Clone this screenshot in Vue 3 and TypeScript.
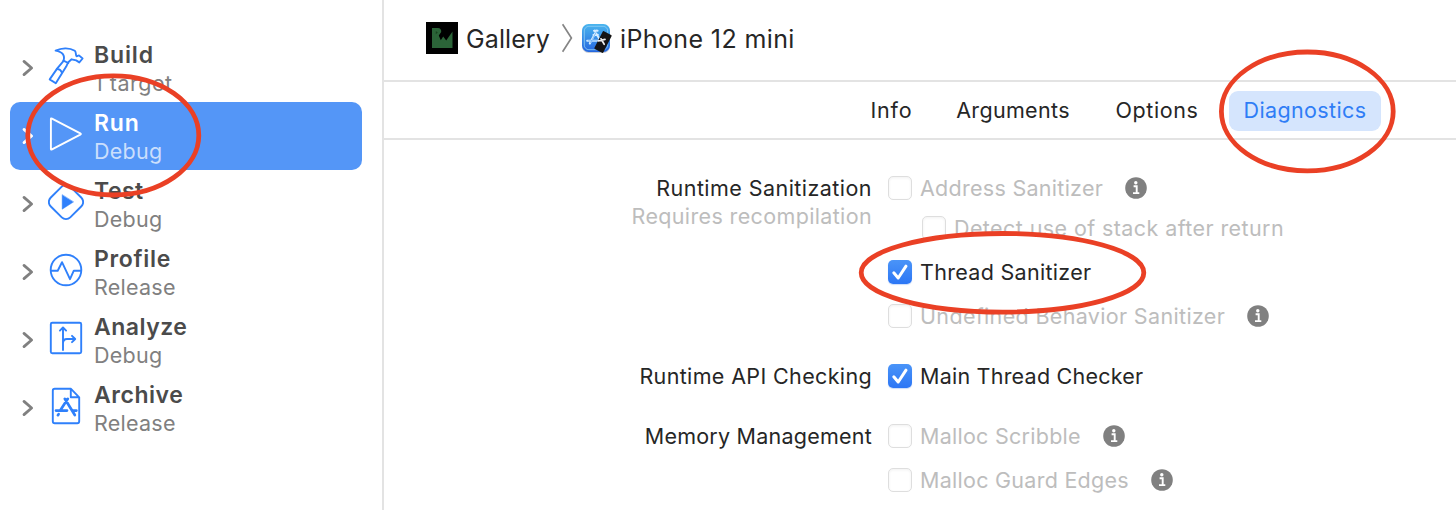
<script setup lang="ts">
interface Step { title: string; sub: string; icon: string; ts: number; ss: number; selected?: boolean }
interface Option { label: string; ls: number; checked?: boolean; info?: boolean; nested?: boolean }
interface Group { title: string; ls: number; note?: string; noteLs?: number; options: Option[] }

const steps: Step[] = [
  { title: 'Build', sub: '1 target', icon: 'hammer', ts: 0.85, ss: 0.5 },
  { title: 'Run', sub: 'Debug', icon: 'run', ts: 0.8, ss: 0.27, selected: true },
  { title: 'Test', sub: 'Debug', icon: 'test', ts: 0.5, ss: 0.27 },
  { title: 'Profile', sub: 'Release', icon: 'profile', ts: 0.7, ss: 0.25 },
  { title: 'Analyze', sub: 'Debug', icon: 'analyze', ts: 0.5, ss: 0.27 },
  { title: 'Archive', sub: 'Release', icon: 'archive', ts: 0.55, ss: 0.25 },
]

const tabs = [
  { label: 'Info', width: 68, ls: 0.8 },
  { label: 'Arguments', width: 144, ls: 0.33 },
  { label: 'Options', width: 112, ls: 0.59 },
  { label: 'Diagnostics', width: 152, ls: 0.36, active: true },
]

const groups: Group[] = [
  {
    title: 'Runtime Sanitization', ls: 0.45, note: 'Requires recompilation', noteLs: 0.36,
    options: [
      { label: 'Address Sanitizer', ls: 0.28, info: true },
      { label: 'Detect use of stack after return', ls: 0.41, nested: true },
      { label: 'Thread Sanitizer', ls: 0.3, checked: true },
      { label: 'Undefined Behavior Sanitizer', ls: 0.34, info: true },
    ],
  },
  { title: 'Runtime API Checking', ls: 0.36, options: [{ label: 'Main Thread Checker', ls: 0.23, checked: true }] },
  {
    title: 'Memory Management', ls: 0.23,
    options: [
      { label: 'Malloc Scribble', ls: 0.26, info: true },
      { label: 'Malloc Guard Edges', ls: 0.27, info: true },
    ],
  },
]

const spacing = (v?: number) => ({ letterSpacing: `${v ?? 0}px` })
</script>

<template>
  <div class="window">
    <aside class="sidebar">
      <div v-for="s in steps" :key="s.title" class="step" :class="{ selected: s.selected }">
        <svg class="chevron" width="12" height="18" viewBox="0 0 12 18"><path d="M2 2.4 9.6 9 2 15.6" /></svg>
        <svg class="icon" width="36" height="40" viewBox="0 0 36 40">
          <g v-if="s.icon === 'hammer'">
            <path d="M7.6 4.6C13 2.2 21 1.2 26.8 4.8C28.4 6 27.4 8.8 28.5 10.3L31 9.4L34.6 12.5L31.3 16.4L28.2 14.4L23.6 13.3L20.3 16.2L18.2 20.6L7.8 37.3L1.7 33.4L9.3 22.4L15.4 15.2C17.4 9.6 14.5 5.6 7.6 4.6Z" />
            <path d="M15.4 14.6 20.3 17M8.8 23.2C11 22.8 13 24.3 13.8 26.4" />
          </g>
          <path v-else-if="s.icon === 'run'" d="M2.9 5.2V34.8Q2.9 36 4 35.4L32.3 20.7Q33.5 20 32.3 19.3L4 4.6Q2.9 4 2.9 5.2Z" />
          <g v-else-if="s.icon === 'test'">
            <rect x="4.1" y="6.1" width="27.8" height="27.8" rx="6" transform="rotate(45 18 20)" />
            <path class="solid" d="M14.2 13V27.2L25.3 20.1Z" />
          </g>
          <g v-else-if="s.icon === 'profile'">
            <circle cx="18" cy="20" r="15.3" />
            <path d="M3 20.7H9.7L14 12.2 22 29.2 25.8 20.7H33" />
          </g>
          <g v-else-if="s.icon === 'analyze'">
            <rect x="2.8" y="4.8" width="30.4" height="30.4" rx="1.5" />
            <path d="M15 32V10M11.9 12.6 15 9.4 18.1 12.6M15 25.5Q15 21 19 21H27M24 17.8 27.2 21 24 24.2" />
          </g>
          <g v-else>
            <path d="M23 2.8H6.7Q4.8 2.8 4.8 4.7V35.3Q4.8 37.2 6.7 37.2H29.3Q31.2 37.2 31.2 35.3V11.3ZM22.8 3V11.3H31" />
            <path class="tools" d="M19.8 12.8 12.2 24.4M10.6 28.2 9.9 29.2M16.8 12.8 26.8 29M8 24.6H19M25 24.6H28.4" />
          </g>
        </svg>
        <div class="names">
          <div class="title" :style="spacing(s.ts)">{{ s.title }}</div>
          <div class="sub" :style="spacing(s.ss)">{{ s.sub }}</div>
        </div>
      </div>
    </aside>

    <main class="main">
      <header class="path">
        <svg width="32" height="32" viewBox="0 0 32 32">
          <rect width="32" height="32" fill="#000" />
          <path d="M6 6H12Q15.5 6.3 15.2 10L12.8 13.5 14.8 18.3 17.2 14.4 20.2 18.6 26.5 9.5V26H6Z" fill="#2b6438" />
          <path d="M9.8 9V12.2L11.8 10.4Z" fill="#19431f" />
        </svg>
        <span class="crumb project">Gallery</span>
        <svg class="sep" width="12" height="30" viewBox="0 0 12 30"><path d="M1.6 1.2 10.4 15 1.6 28.8" fill="none" stroke="#858585" stroke-width="1.7" /></svg>
        <svg class="app" width="32" height="32" viewBox="0 0 32 32">
          <defs>
            <linearGradient id="appFill" x1="0" y1="0" x2="0" y2="1"><stop offset="0" stop-color="#4ab5ee" /><stop offset="1" stop-color="#2567df" /></linearGradient>
          </defs>
          <rect x="2" y="3" width="28" height="28" rx="6.5" fill="#c9ced6" />
          <rect x="2" y="2" width="28" height="28" rx="6.5" fill="url(#appFill)" />
          <rect x="4.3" y="4.3" width="23.4" height="23.4" rx="4.6" fill="none" stroke="#8fcff5" stroke-width=".8" />
          <path d="M16.6 8.5 9.8 21.5M14.5 8.5 20 18M14 8.8H17.6M13.4 13H18M7.2 18.8H21" fill="none" stroke="#d7edff" stroke-width="2" stroke-linecap="round" />
          <path d="M16.6 9.5 10.4 21M7.8 18.8H18" fill="none" stroke="#4c9df0" stroke-width=".6" />
          <rect x="18" y="10" width="10" height="20" rx="1" fill="#141414" transform="rotate(27 23 20)" />
          <path d="M18.5 18.8 25 17.4M21 16.8 24.2 22.3" stroke="#eee" stroke-width="1.7" stroke-linecap="round" />
        </svg>
        <span class="crumb scheme">iPhone 12 mini</span>
      </header>

      <nav class="tabs">
        <div v-for="t in tabs" :key="t.label" class="tab" :class="{ active: t.active }" :style="{ width: `${t.width}px`, ...spacing(t.ls) }">{{ t.label }}</div>
      </nav>

      <div class="groups">
        <section v-for="g in groups" :key="g.title" class="group">
          <div class="legend">
            <div :style="spacing(g.ls)">{{ g.title }}</div>
            <div v-if="g.note" class="note" :style="spacing(g.noteLs)">{{ g.note }}</div>
          </div>
          <div class="options">
            <div v-for="o in g.options" :key="o.label" class="option" :class="{ on: o.checked, nested: o.nested }">
              <span class="box">
                <svg v-if="o.checked" width="24" height="24" viewBox="0 0 24 24"><path d="M5.8 12.8 10.2 18 18 6.2" /></svg>
              </span>
              <span class="label" :style="spacing(o.ls)">{{ o.label }}</span>
              <svg v-if="o.info" class="info" width="22" height="22" viewBox="0 0 22 22">
                <circle cx="11" cy="11" r="10.8" fill="#808080" />
                <circle cx="10.8" cy="5.7" r="1.7" fill="#fff" />
                <path d="M8.6 9.3H11.7V16M8 16.1H14.3" fill="none" stroke="#fff" stroke-width="1.9" />
              </svg>
            </div>
          </div>
        </section>
      </div>
    </main>

    <svg class="marks" width="1456" height="510" viewBox="0 0 1456 510">
      <ellipse cx="113.3" cy="135.4" rx="85.5" ry="59.6" />
      <ellipse cx="1307.3" cy="111.4" rx="85.9" ry="59.4" />
      <ellipse cx="1002.5" cy="272.8" rx="141.3" ry="39.3" />
    </svg>
  </div>
</template>

<style>
body { margin: 0; background: #fff; }
</style>

<style scoped>
.window {
  position: relative;
  display: flex;
  width: 1456px;
  height: 510px;
  overflow: hidden;
  background: #fff;
  color: #262626;
  font: 400 21.5px/28px Inter, "Open Sans", sans-serif;
  white-space: nowrap;
}
.sidebar {
  box-sizing: border-box;
  width: 384px;
  padding: 34px 20px 0 10px;
  border-right: 2px solid #e3e3e3;
}
.step {
  display: flex;
  align-items: center;
  height: 68px;
  border-radius: 10px;
  color: #4b4b4b;
}
.chevron { margin: 0 14px 1px 12px; fill: none; stroke: #808080; stroke-width: 2.8; stroke-linecap: round; stroke-linejoin: round; }
.icon { margin-bottom: 4px; fill: none; stroke: #2f80fb; stroke-width: 1.9; stroke-linecap: round; stroke-linejoin: round; }
.icon .solid { fill: #2f80fb; stroke-width: .5; }
.icon .tools { stroke-width: 2.7; }
.names { margin: 2px 0 0 10px; }
.title { font-size: 23px; font-weight: 600; }
.sub { color: #808080; }
.selected { background: #5496f7; color: #fff; }
.selected .sub { color: #cbdffc; }
.selected .chevron, .selected .icon { stroke: #fff; }

.main { flex: 1; min-width: 0; }
.path {
  display: flex;
  align-items: center;
  box-sizing: border-box;
  height: 82px;
  padding: 0 0 4px 42px;
  border-bottom: 2px solid #e3e3e3;
  font-size: 25px;
}
.crumb { padding-top: 2px; }
.project { width: 87px; margin-left: 8px; letter-spacing: .1px; }
.sep { margin-left: 8px; }
.app { margin-left: 7px; }
.scheme { margin-left: 8px; letter-spacing: .38px; }
.tabs {
  display: flex;
  justify-content: flex-end;
  align-items: center;
  gap: 16px;
  box-sizing: border-box;
  height: 58px;
  padding: 2px 75px 0 0;
  border-bottom: 2px solid #e3e3e3;
}
.tab { height: 40px; line-height: 39px; border-radius: 9px; text-align: center; }
.tab:first-child { text-indent: 1px; }
.active { background: #d5e5fd; color: #2f7df6; }

.groups { display: flex; flex-direction: column; gap: 32px; padding-top: 34px; }
.group { display: grid; grid-template-columns: 488px 1fr; column-gap: 16px; }
.legend { text-align: right; }
.note { color: #bdbdbd; }
.options { display: flex; flex-direction: column; gap: 16px; }
.option { display: flex; align-items: center; height: 28px; color: #bdbdbd; }
.option.nested { margin: -4px 0 0 34px; }
.option.on { color: #262626; }
.box {
  box-sizing: border-box;
  width: 24px;
  height: 24px;
  margin-right: 8px;
  border: 1px solid #dedede;
  border-radius: 5px;
  box-shadow: inset 0 1px 3px rgba(0, 0, 0, .06);
}
.on .box { border: 0; background: linear-gradient(#4a94f8, #2c76f5); box-shadow: 0 1px 1px rgba(40, 110, 230, .25); }
.box svg { display: block; fill: none; stroke: #fff; stroke-width: 3; stroke-linecap: round; stroke-linejoin: round; }
.info { margin-left: 22px; }
.marks { position: absolute; inset: 0; fill: none; stroke: #ea4025; stroke-width: 4.8; pointer-events: none; }
</style>
